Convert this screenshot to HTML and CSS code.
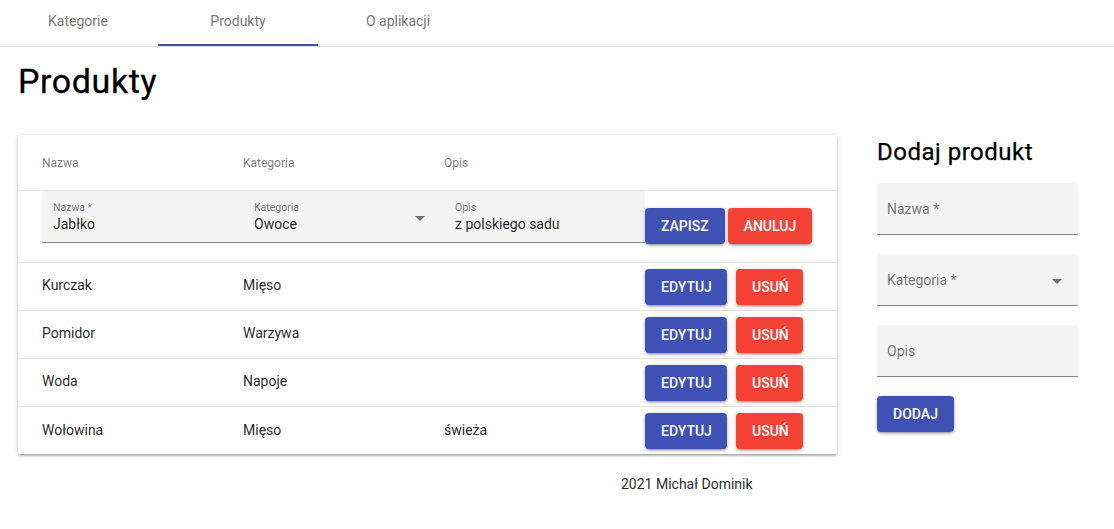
FILE: index.html
```html
<!DOCTYPE html>
<html lang="pl">
<head>
<meta charset="utf-8">
<title>Produkty</title>
<link rel="stylesheet" href="styles.css">
</head>
<body>
<nav class="tabs">
  <div class="tab">Kategorie</div>
  <div class="tab tab-active">Produkty</div>
  <div class="tab">O aplikacji</div>
</nav>
<main class="main">
  <h1 class="title">Produkty</h1>
  <div class="layout">
    <section class="paper">
      <div class="row row-head">
        <div class="cell">Nazwa</div>
        <div class="cell">Kategoria</div>
        <div class="cell">Opis</div>
        <div class="cell"></div>
      </div>
      <div class="row row-edit">
        <div class="efield">
          <div class="ecol">
            <span class="elabel">Nazwa *</span>
            <span class="evalue">Jabłko</span>
          </div>
        </div>
        <div class="efield">
          <div class="ecol">
            <span class="elabel">Kategoria</span>
            <span class="evalue">Owoce</span>
          </div>
          <svg class="arrow arrow-edit" width="10" height="5" viewBox="0 0 10 5"><polygon points="0,0 10,0 5,5"/></svg>
        </div>
        <div class="efield">
          <div class="ecol">
            <span class="elabel">Opis</span>
            <span class="evalue">z polskiego sadu</span>
          </div>
        </div>
        <div class="btns btns-edit">
          <button class="btn btn-primary">Zapisz</button>
          <button class="btn btn-danger">Anuluj</button>
        </div>
      </div>
      <div class="row row-body">
        <div class="cell">Kurczak</div>
        <div class="cell">Mięso</div>
        <div class="cell"></div>
        <div class="cell btns"><button class="btn btn-primary">Edytuj</button><button class="btn btn-danger">Usuń</button></div>
      </div>
      <div class="row row-body">
        <div class="cell">Pomidor</div>
        <div class="cell">Warzywa</div>
        <div class="cell"></div>
        <div class="cell btns"><button class="btn btn-primary">Edytuj</button><button class="btn btn-danger">Usuń</button></div>
      </div>
      <div class="row row-body">
        <div class="cell">Woda</div>
        <div class="cell">Napoje</div>
        <div class="cell"></div>
        <div class="cell btns"><button class="btn btn-primary">Edytuj</button><button class="btn btn-danger">Usuń</button></div>
      </div>
      <div class="row row-body row-last">
        <div class="cell">Wołowina</div>
        <div class="cell">Mięso</div>
        <div class="cell">świeża</div>
        <div class="cell btns"><button class="btn btn-primary">Edytuj</button><button class="btn btn-danger">Usuń</button></div>
      </div>
    </section>
    <aside class="side">
      <h2 class="side-title">Dodaj produkt</h2>
      <div class="field"><span class="flabel">Nazwa *</span></div>
      <div class="field"><span class="flabel">Kategoria *</span><svg class="arrow" width="10" height="5" viewBox="0 0 10 5"><polygon points="0,0 10,0 5,5"/></svg></div>
      <div class="field"><span class="flabel">Opis</span></div>
      <button class="btn btn-primary btn-add">Dodaj</button>
    </aside>
  </div>
  <footer class="footer">2021 Michał Dominik</footer>
</main>
</body>
</html>
```
FILE: styles.css
```css
* { box-sizing: border-box; }
html, body { margin: 0; padding: 0; background: #fff; }
body {
  font-family: Roboto, "Liberation Sans", Arial, sans-serif;
  color: rgba(0,0,0,0.87);
  width: 1114px;
}

.tabs {
  display: flex;
  height: 47px;
  border-bottom: 1px solid #e0e0e0;
  margin-left: -2px;
}
.tab {
  width: 160px;
  height: 46px;
  display: flex;
  align-items: center;
  justify-content: center;
  padding-bottom: 4px;
  font-size: 14px;
  color: #777;
}
.tab-active {
  border-bottom: 2px solid #3f51b5;
  padding-bottom: 2px;
}

.main { padding: 13px 18px 0; }
.title {
  margin: 0;
  font-size: 34px;
  font-weight: 400;
  letter-spacing: 0.6px;
  line-height: 42px;
  color: #000;
  -webkit-text-stroke: 0.3px #000;
}

.layout {
  display: flex;
  align-items: flex-start;
  margin-top: 33px;
}

.paper {
  width: 819px;
  background: #fff;
  border-radius: 2px;
  box-shadow: 0 1px 5px rgba(0,0,0,0.2), 0 2px 2px rgba(0,0,0,0.14), 0 3px 1px -2px rgba(0,0,0,0.12);
}
.row {
  display: grid;
  grid-template-columns: 201px 201px 201px 216px;
  border-bottom: 1px solid #e0e0e0;
}
.row-head { height: 56px; }
.row-body { height: 48px; }
.row-last { border-bottom: none; }
.row-last.row-body { height: 47px; }
.cell {
  display: flex;
  align-items: center;
  padding-left: 24px;
  font-size: 14px;
  color: rgba(0,0,0,0.87);
}
.row-body .cell:not(.btns) { padding-bottom: 3px; }
.row-last .cell:not(.btns) { padding-bottom: 2px; }
.row-head .cell {
  font-size: 12px;
  font-weight: 400;
  color: rgba(0,0,0,0.54);
}

.row-edit {
  display: flex;
  height: 72px;
  padding-left: 24px;
}
.efield {
  width: 201px;
  height: 52px;
  display: flex;
  align-items: flex-start;
  background: #f4f4f4;
  border-bottom: 1px solid rgba(0,0,0,0.45);
  padding: 11px 11px 0;
}
.efield:first-child { border-top-left-radius: 4px; }
.row-edit .efield:nth-child(3) { border-top-right-radius: 4px; }
.ecol { display: flex; flex-direction: column; flex: 1; }
.elabel {
  font-size: 10.5px;
  line-height: 12px;
  color: rgba(0,0,0,0.54);
}
.evalue {
  margin-top: 2px;
  font-size: 14px;
  line-height: 17px;
  color: rgba(0,0,0,0.87);
}
.arrow { fill: rgba(0,0,0,0.54); flex: none; }
.arrow-edit { margin: 14px 8px 0 0; }

.btns { display: flex; align-items: center; gap: 9px; }
.btns-edit { gap: 3px; margin-top: 17px; align-self: flex-start; }

.btn {
  height: 36px;
  min-width: 64px;
  padding: 0 16px;
  border: none;
  border-radius: 4px;
  font-family: Roboto, "Liberation Sans", Arial, sans-serif;
  font-size: 14px;
  font-weight: 500;
  text-transform: uppercase;
  color: #fff;
  box-shadow: 0 1px 5px rgba(0,0,0,0.2), 0 2px 2px rgba(0,0,0,0.14), 0 3px 1px -2px rgba(0,0,0,0.12);
}
.btn-primary { background: #3f51b5; }
.btn-danger { background: #f44336; }
.row-body .btn-primary { width: 82px; }
.row-body .btn-danger { width: 67px; }

.side {
  width: 201px;
  margin-left: 40px;
  display: flex;
  flex-direction: column;
  align-items: flex-start;
}
.side-title {
  margin: 1px 0 15px;
  font-size: 24px;
  font-weight: 400;
  letter-spacing: 0.5px;
  line-height: 32px;
  color: #000;
  -webkit-text-stroke: 0.25px #000;
}
.field {
  width: 201px;
  height: 52px;
  display: flex;
  align-items: flex-start;
  justify-content: space-between;
  background: #f4f4f4;
  border-top-left-radius: 4px;
  border-top-right-radius: 4px;
  border-bottom: 1px solid rgba(0,0,0,0.45);
  padding: 18px 16px 0 10px;
  margin-bottom: 19px;
}
.field .arrow { margin-top: 7px; }
.flabel {
  font-size: 14px;
  line-height: 17px;
  color: rgba(0,0,0,0.54);
}
.btn-add { width: 77px; }

.footer {
  margin-top: 20px;
  padding-left: 603px;
  font-size: 14px;
  line-height: 20px;
  color: rgba(0,0,0,0.87);
}
```
